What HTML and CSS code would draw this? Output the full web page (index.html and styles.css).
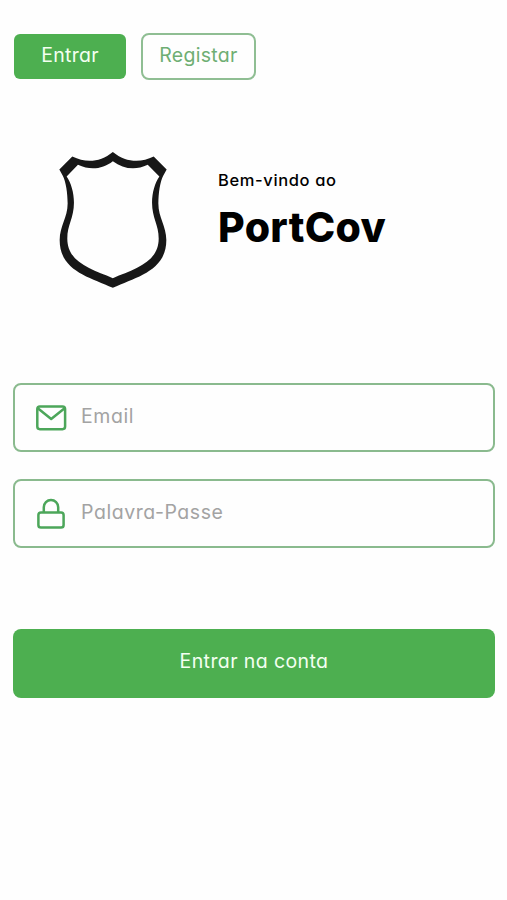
FILE: index.html
```html
<!DOCTYPE html>
<html lang="pt">
<head>
  <meta charset="UTF-8">
  <title>PortCov</title>
  <meta name="viewport" content="width=device-width, initial-scale=1.0">
  <link rel="stylesheet" href="styles.css">
</head>
<body>
  <nav class="tabs">
    <button class="tab active"><span>Entrar</span></button>
    <button class="tab register"><span>Registar</span></button>
  </nav>

  <header class="welcome">
    <svg class="shield" viewBox="42 33 325 411">
      <path fill="#171717" fill-rule="evenodd" d="M204 35 C242 66 286 69 327 49 L366 88 L356 106 C346 125 341 160 341 190 C341 232 365 258 365 300 C365 392 278 411 204 444 C130 411 44 392 44 300 C44 258 68 232 68 190 C68 160 63 125 53 106 L43 88 L82 49 C124 69 166 66 204 35 Z M204 63 C174 86 138 92 99 74 L65 109 C78 128 87 157 87 188 C87 234 67 254 67 296 C67 368 138 387 204 415 C270 387 342 368 342 296 C342 254 322 234 322 188 C322 157 331 128 344 109 L309 74 C271 92 235 86 204 63 Z"/>
    </svg>
    <div class="brand">
      <p>Bem-vindo ao</p>
      <h1>PortCov</h1>
    </div>
  </header>

  <form class="login">
    <label class="field">
      <svg class="icon" viewBox="0 0 32 32">
        <rect x="2.3" y="4.4" width="27.8" height="22.8" rx="2.6"/>
        <path d="M2.8 6.3 L16.2 17 L29.6 6.3"/>
      </svg>
      <input class="email" type="email" placeholder="Email">
    </label>
    <label class="field">
      <svg class="icon" viewBox="0 0 32 32">
        <rect x="3.4" y="14.4" width="25.2" height="15.2" rx="2.6"/>
        <path d="M8.8 14.4 V9.2 A7.2 7.2 0 0 1 23.2 9.2 V14.4"/>
      </svg>
      <input class="password" type="password" placeholder="Palavra-Passe">
    </label>
    <button class="submit" type="button"><span>Entrar na conta</span></button>
  </form>
</body>
</html>
```
FILE: styles.css
```css
* {
  box-sizing: border-box;
}

body {
  margin: 0;
  padding: 33px 12px 0 13px;
  background: #fefefe;
  font-family: Inter, "Open Sans", sans-serif;
  font-feature-settings: "cv11";
  color: #000;
}

button,
input {
  font-family: inherit;
  font-feature-settings: inherit;
  font-size: 19.5px;
  letter-spacing: 0.4px;
}

button {
  padding: 0 0 4px;
  border: none;
  border-radius: 8px;
  background: #4daf50;
  color: #f3fff1;
  cursor: pointer;
}

.tabs {
  display: flex;
  align-items: center;
  gap: 15px;
  height: 47px;
  padding-left: 1px;
}

.tab {
  width: 112px;
  height: 45px;
  border-radius: 6px;
  letter-spacing: 0.3px;
}

.tab.register {
  width: 115px;
  height: 47px;
  border: 2px solid #8fbe93;
  border-radius: 8px;
  background: #fefefe;
  color: #6eae73;
}

.welcome {
  display: flex;
  margin-top: 71px;
  padding-left: 46px;
  height: 137px;
}

.shield {
  width: 108px;
  height: 137px;
}

.brand {
  margin-left: 51px;
  padding-top: 17px;
}

.brand p {
  margin: 0;
  font-size: 16.5px;
  font-weight: 500;
  line-height: 24px;
  letter-spacing: 0.62px;
}

.brand h1 {
  margin: 5px 0 0;
  font-size: 41px;
  font-weight: 800;
  line-height: 60px;
  letter-spacing: 0.3px;
}

.login {
  margin-top: 95px;
}

.field {
  display: flex;
  align-items: center;
  height: 69px;
  margin-bottom: 27px;
  padding-left: 20px;
  border: 2px solid #8aba8e;
  border-radius: 8px;
}

.icon {
  width: 32px;
  height: 32px;
  fill: none;
  stroke: #4ca65a;
  stroke-width: 2.5;
  stroke-linejoin: round;
}

.field input {
  flex: 1;
  min-width: 0;
  margin-left: 14px;
  padding: 0 0 3px;
  border: none;
  outline: none;
  background: none;
  letter-spacing: 0.55px;
}

.field input::placeholder {
  color: #a3a3a3;
}

.submit {
  display: block;
  width: 100%;
  height: 69px;
  margin-top: 81px;
  padding-bottom: 5px;
}
```
